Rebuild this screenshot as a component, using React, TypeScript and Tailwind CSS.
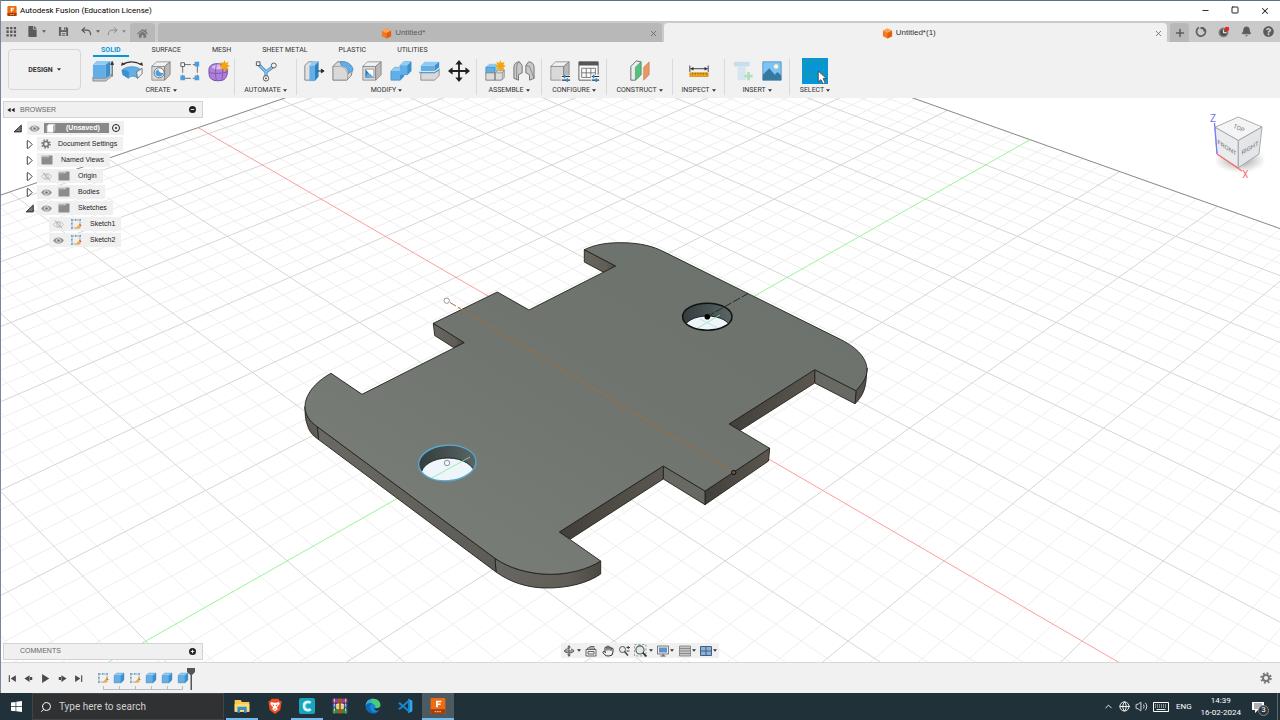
import type { ReactNode } from "react";
import clsx from "clsx";
import { Bell, X, Minus, Square, Plus, Search, ChevronUp, Volume2, Globe, Hand } from "lucide-react";
import { FaHome, FaQuestionCircle, FaFile } from "react-icons/fa";

// ─── Shared bits ────────────────────────────────────────────────────────────────
function Caret({ className }: { className?: string }) {
  return (
    <svg viewBox="0 0 6 4" className={clsx("w-1 h-[3px] shrink-0", className)}>
      <path d="M0 0h6L3 4z" fill="currentColor" />
    </svg>
  );
}

function Icon({ children, className = "size-6" }: { children: ReactNode; className?: string }) {
  return (
    <svg viewBox="0 0 24 24" fill="none" className={clsx("shrink-0", className)} strokeLinejoin="round">
      {children}
    </svg>
  );
}

function Cube({ front, top, side, edge }: { front: string; top: string; side: string; edge: string }) {
  return (
    <g stroke={edge} strokeWidth="0.7">
      <path d="M2 7h14v15H2z" fill={front} />
      <path d="M2 7l5-5h15l-6 5z" fill={top} />
      <path d="M16 7l6-5v14l-6 6z" fill={side} />
    </g>
  );
}

const BLUE = { front: "#62aee6", top: "#8fcaf4", side: "#3d8fce", edge: "#4a8fc4" };
const GREY = { front: "#d9d9d9", top: "#f2f2f2", side: "#b9b9b9", edge: "#707070" };

function Spark() {
  return <path d="M18 0l1.300 3.400 3.300-1.500-1.500 3.300L24 6.500l-2.900 1.300 1.500 3.300-3.300-1.500L18 13l-1.300-3.400-3.300 1.500 1.500-3.300L12 6.500l2.900-1.300-1.500-3.300 3.300 1.500z" fill="#f5a40c" />;
}

// ─── Ribbon icons ───────────────────────────────────────────────────────────────
const icons: Record<string, ReactNode> = {
  extrude: (
    <>
      <path d="M1 19v4h14l6-5v-2l-6 4H1z" fill="#c4c4c4" stroke="#777" strokeWidth="0.8" />
      <path d="M1 5h14v15H1z" fill="#62aee6" />
      <path d="M1 5l4-4h15l-5 4z" fill="#8fcaf4" />
      <path d="M15 5l5-4v15l-5 4z" fill="#3d8fce" />
      <path d="M22 18V4M20.500 5L22 1.500 23.500 5z" stroke="#333" fill="#333" />
    </>
  ),
  revolve: (
    <>
      <path d="M2 5c5-4 14-4 20 0" stroke="#333" strokeWidth="1.200" />
      <path d="M0 6.500l1-4 3.500 2zM24 6.500l-1-4-3.500 2z" fill="#333" />
      <path d="M1 11c5-5 17-5 21 0l-4 9c-3-3-7-3-10 0l-6-4z" fill="#62aee6" stroke="#3e85ba" strokeWidth="0.7" />
      <path d="M1 11c3-1 6 0 8 3l-1 6-6-4z" fill="#3d8fce" />
      <path d="M17 13l6-4v6l-5 5z" fill="#eee" stroke="#555" strokeWidth="0.8" />
    </>
  ),
  hole: (
    <>
      <Cube {...GREY} />
      <circle cx="10" cy="14" r="5.500" fill="#fafafa" stroke="#666" />
      <path d="M6 15.500A4.500 4.500 0 0 0 14.500 14 5 5 0 0 1 9 10a5 5 0 0 0-3 5.500z" fill="#4b9fde" />
    </>
  ),
  pattern: (
    <>
      <path d="M4 5h16M4 5v15M20 5v15M4 20h16" stroke="#666" strokeDasharray="9 2" />
      <path d="M2 3h4v4H2z" fill="#fff" stroke="#555" />
      <path d="M17 2h5v5h-5zM1.500 17h5v5h-5zM17 17h5v5h-5z" fill="#4a9fe0" />
    </>
  ),
  form: (
    <>
      <path d="M1 11c0-5 4-7 9-7s10 2 11 6-1 11-5 12-9 1-12-1-3-6-3-10z" fill="#ae80da" stroke="#6b4798" />
      <path d="M4 8c2-3 5-3 9-3l3 4c-4 2-8 2-12-1z" fill="#d9bdf3" />
      <path d="M9 5c-1 5-1 12 0 17M15 5c2 5 1 12 0 16M2 14c6 1 13 1 19-1" stroke="#7f55ad" />
      <Spark />
    </>
  ),
  automate: (
    <>
      <path d="M4 5l8 8 8-6M12 13v6" stroke="#4a8fc4" strokeWidth="3.500" />
      <path d="M4 5l8 8 8-6M12 13v6" stroke="#8fc6ef" strokeWidth="1.500" />
      <path d="M1.500 2h4v4h-4z" fill="#eee" stroke="#555" />
      <circle cx="20.500" cy="6" r="2.700" fill="#eee" stroke="#555" />
      <circle cx="12" cy="20" r="3" fill="#eee" stroke="#555" />
      <circle cx="12" cy="20" r="1" fill="#555" />
    </>
  ),
  press: (
    <>
      <path d="M2 6l4-4h5v16l-4 4H2z" fill="#e1e1e1" stroke="#666" strokeWidth="0.8" />
      <path d="M7 6h6v17H7z" fill="#62aee6" />
      <path d="M7 6l4-5h6l-4 5z" fill="#8fcaf4" />
      <path d="M13 6l4-5v17l-4 5z" fill="#2f80bf" />
      <path d="M16 12h4M20 10l3 2-3 2z" stroke="#222" fill="#222" />
    </>
  ),
  fillet: (
    <>
      <path d="M1 7l5-5h7c5 1 9 5 9 10l-1 5-5 5H1z" fill="#d9d9d9" stroke="#777" />
      <path d="M9 2h5c5 1 9 5 9 9l-5 4c0-5-3-8-8-9z" fill="#62aee6" stroke="#3e85ba" strokeWidth="0.700" />
      <path d="M1 7h8c5 1 7 4 8 8v7" stroke="#888" strokeWidth="0.700" />
    </>
  ),
  shell: (
    <>
      <Cube {...GREY} />
      <path d="M5 10h9v9H5z" fill="#fff" stroke="#777" strokeWidth="0.7" />
      <path d="M5 10l4 5v4H5z" fill="#2f80bf" />
      <path d="M5 19h9l-4-4H7z" fill="#62aee6" />
    </>
  ),
  combine: (
    <>
      <path d="M1 12l4-4h6V6l4-4h8v10l-4 4h-4v2l-4 4H1z" fill="#62aee6" stroke="#4189bd" strokeWidth="0.7" />
      <path d="M11 6l4-4h8l-4 4zM1 12l4-4h6v4z" fill="#93cdf5" />
      <path d="M19 6l4-4v10l-4 4zM11 22l4-4v-2h-2l-2 1z" fill="#3d8fce" />
    </>
  ),
  split: (
    <>
      <path d="M2 14h15l5-3v6l-5 5H2z" fill="#d9d9d9" stroke="#777" strokeWidth="0.8" />
      <path d="M2 6h15v6H2z" fill="#62aee6" />
      <path d="M2 6l4-4h16l-5 4z" fill="#8fcaf4" />
      <path d="M17 6l5-4v6l-5 4z" fill="#3d8fce" />
      <path d="M0 13.500h17l6-4" stroke="#319de4" />
    </>
  ),
  move: (
    <path d="M11 5v6H5V8L0 12l5 4v-3h6v6H8l4 5 4-5h-3v-6h6v3l5-4-5-4v3h-6V5h3l-4-5-4 5z" fill="#222" />
  ),
  component: (
    <>
      <path d="M2 7l4-3h8v8H2z" fill="#8fcaf4" />
      <path d="M2 8h10v7H2z" fill="#62aee6" stroke="#3e85ba" strokeWidth="0.700" />
      <path d="M2 14h10v8H2zM12 14l3-3h7v8l-3 3h-7z" fill="#ddd" stroke="#777" strokeWidth="0.900" />
      <path d="M12 14h8l2-3M20 14v8" stroke="#888" strokeWidth="0.800" />
      <Spark />
    </>
  ),
  joint: (
    <g fill="#c9c9c9" stroke="#707070">
      <path d="M1 20V8c0-4 3-6 6-6l3 4v8l-4 2v6z" />
      <path d="M23 20V8c0-4-3-6-6-6l-3 4v8l4 2v6z" />
      <path d="M4 21V9c0-4 1-6 3-7M14 6l4 1 5 13" fill="none" strokeWidth="0.800" />
    </g>
  ),
  configure: (
    <>
      <Cube {...GREY} />
      <path d="M13 17h11v7H13z" fill="#f1f1f1" />
      <path d="M14 18h9M14 22h9" stroke="#333" strokeWidth="1.200" />
      <path d="M17 16v4M20 20v4" stroke="#1896dc" strokeWidth="1.600" />
    </>
  ),
  table: (
    <>
      <path d="M1 2h21v20H1z" fill="#fafafa" stroke="#555" />
      <path d="M1 2h21v4H1z" fill="#555" />
      <path d="M4 9h15v10H4zM4 14h15M9 9v10M14 9v10" stroke="#666" strokeWidth="0.900" />
      <path d="M14 16h10v8H14z" fill="#f1f1f1" />
      <path d="M15 18h8M15 22h8" stroke="#333" strokeWidth="1.200" />
      <path d="M17 16v4M20 20v4" stroke="#1896dc" strokeWidth="1.600" />
    </>
  ),
  plane: (
    <>
      <path d="M2 7l6-6 5 1v14l-6 6H2z" fill="#ededed" stroke="#666" />
      <path d="M7 8l6-6v14l-6 6z" fill="#55c17f" stroke="#459a69" strokeWidth="0.700" />
      <path d="M16 8l6-6v14l-6 6z" fill="#e99763" stroke="#c67e50" strokeWidth="0.700" />
    </>
  ),
  measure: (
    <>
      <path d="M2 6v7M22 6v7M4 9.500h16" stroke="#333" />
      <path d="M2 9.500l4-2v4zM22 9.500l-4-2v4z" fill="#333" />
      <path d="M2 14h20v4H2z" fill="#f2a513" stroke="#c27f0a" strokeWidth="0.700" />
      <path d="M5 14v2M8 14v2M11 14v2M14 14v2M17 14v2M20 14v2" stroke="#7a5106" strokeWidth="0.800" />
    </>
  ),
  bolt: (
    <>
      <path d="M2 2h17v5H2z" fill="#c8dceb" />
      <path d="M6 7h9v15H6z" fill="#d7e5f0" />
      <path d="M18 13v9M13.500 17.500h9" stroke="#b1dfbc" strokeWidth="3" />
    </>
  ),
  decal: (
    <>
      <path d="M2 2h20v20H2z" fill="#7cc3f7" stroke="#5a92c0" />
      <circle cx="16.500" cy="7" r="2.500" fill="#fff7c5" />
      <path d="M2 16l7-7 6 7 3-3 4 4v5H2z" fill="#37789f" />
    </>
  ),
  select: (
    <>
      <path d="M0 0h24v24H0z" fill="#0696d7" />
      <path d="M2 2.500h18v14H2z" stroke="#31a15f" strokeDasharray="3 2" />
      <path d="M15 12v10l2.500-2 2 4 2-1-2-4h3z" fill="#fff" stroke="#444" strokeWidth="0.800" />
    </>
  ),
};

interface Group {
  label: string;
  items: string[];
  width: string;
}

const groups: Group[] = [
  { label: "CREATE", items: ["extrude", "revolve", "hole", "pattern", "form"], width: "w-[147px]" },
  { label: "AUTOMATE", items: ["automate"], width: "w-[62px]" },
  { label: "MODIFY", items: ["press", "fillet", "shell", "combine", "split", "move"], width: "w-[180px]" },
  { label: "ASSEMBLE", items: ["component", "joint"], width: "w-[65px]" },
  { label: "CONFIGURE", items: ["configure", "table"], width: "w-[65px]" },
  { label: "CONSTRUCT", items: ["plane"], width: "w-[66px]" },
  { label: "INSPECT", items: ["measure"], width: "w-[52px]" },
  { label: "INSERT", items: ["bolt", "decal"], width: "w-[65px]" },
  { label: "SELECT", items: ["select"], width: "w-[50px]" },
];

const workspaceTabs = ["SOLID", "SURFACE", "MESH", "SHEET METAL", "PLASTIC", "UTILITIES"];

// ─── Title bar + document tabs ──────────────────────────────────────────────────
function FusionLogo({ className }: { className?: string }) {
  return (
    <Icon className={className}>
      <rect x="1" y="0" width="22" height="24" rx="2" fill="#f06a10" />
      <path d="M1 17h22v5l-2 2H3l-2-2z" fill="#a93c04" />
      <path d="M9 14V4h8v2.300h-5.200v2H16v2.200h-4.200V14z" fill="#fff" />
      <path d="M7 20.500h10" stroke="#e9b69a" strokeWidth="2" strokeDasharray="2.500 1" />
    </Icon>
  );
}

function OrangeCube() {
  return (
    <Icon className="size-[11px]">
      <path d="M12 1l10 5v12l-10 5-10-5V6z" fill="#f47a1f" />
      <path d="M12 1l10 5-10 5L2 6z" fill="#fda45c" />
      <path d="M12 11l10-5v12l-10 5z" fill="#df5f0c" />
    </Icon>
  );
}

function TitleBar() {
  return (
    <header className="flex h-[21px] items-center border-t border-[#5f6f86] bg-white pl-[7px] font-[Roboto,sans-serif]">
      <FusionLogo className="size-[10px]" />
      <span className="ml-[3px] text-[8px] leading-3 text-black">Autodesk Fusion (Education License)</span>
      <div className="ml-auto flex text-[#222]">
        <button aria-label="Minimize" className="flex w-[30px] justify-center"><Minus size={9} strokeWidth={2.5} /></button>
        <button aria-label="Maximize" className="flex w-[30px] justify-center"><Square size={8} strokeWidth={3} /></button>
        <button aria-label="Close" className="flex w-[30px] justify-center"><X size={10} strokeWidth={2.5} /></button>
      </div>
    </header>
  );
}

function DocumentTabs() {
  return (
    <nav className="flex h-[21px] items-end bg-[#cacaca] text-[#5b5b5b]">
      <div className="flex h-full w-[130px] shrink-0 items-center pl-[6px]">
        <button aria-label="Data panel">
          <Icon className="size-[11px]">
            <path d="M1 2h5v5H1zM9 2h5v5H9zM17 2h5v5h-5zM1 10h5v5H1zM9 10h5v5H9zM17 10h5v5h-5zM1 18h5v5H1zM9 18h5v5H9zM17 18h5v5h-5z" fill="#555" />
          </Icon>
        </button>
        <button aria-label="File" className="ml-[10px] flex items-center gap-1"><FaFile size={11} /><Caret /></button>
        <button aria-label="Save" className="ml-[12px]">
          <Icon className="size-[11px]">
            <path d="M2 2h17l3 3v17H2z" fill="#606060" />
            <path d="M7 2h10v7H7zM6 13h12v9H6z" fill="#cacaca" />
            <path d="M13 3h3v5h-3zM8 15h8v2H8zM8 19h8v2H8z" fill="#606060" />
          </Icon>
        </button>
        <button aria-label="Undo" className="ml-[12px] flex items-center gap-1">
          <Icon className="size-[11px]"><path d="M9 3L2 9l7 6M2 9h11c6 0 8 4 8 11" stroke="#555" strokeWidth="2.500" /></Icon>
          <Caret />
        </button>
        <button aria-label="Redo" className="ml-[7px] flex items-center gap-1 text-[#858585]">
          <Icon className="size-[11px]"><path d="M15 3l7 6-7 6M22 9H11c-6 0-8 4-8 11" stroke="#858585" strokeWidth="2" /></Icon>
          <Caret />
        </button>
      </div>
      <button aria-label="Home" className="flex h-[19px] w-[25px] shrink-0 items-center justify-center rounded-t-sm bg-[#b8b8b8] pt-px text-[#777]"><FaHome size={11} /></button>
      <div className="ml-[3px] flex h-[19px] flex-1 items-center rounded-t-sm bg-[#b8b8b8] pt-px pr-1">
        <a href="#untitled" className="flex flex-1 items-center justify-center gap-[3px] text-[8px]"><OrangeCube />Untitled*</a>
        <button aria-label="Close tab"><X size={9} /></button>
      </div>
      <div className="ml-[2px] flex h-[19px] flex-1 items-center rounded-t-sm bg-[#f1f1f1] pt-px pr-1">
        <a href="#untitled-1" className="flex flex-1 items-center justify-center gap-[3px] text-[8px] text-[#333]"><OrangeCube />Untitled*(1)</a>
        <button aria-label="Close tab"><X size={9} /></button>
      </div>
      <button aria-label="New tab" className="ml-[3px] flex h-[19px] w-[19px] items-center justify-center rounded-t-sm bg-[#b8b8b8]"><Plus size={12} strokeWidth={3} /></button>
      <div className="flex h-[21px] w-[91px] shrink-0 items-center justify-around">
        <button aria-label="Extensions">
          <Icon className="size-3">
            <path d="M8 3a9 9 0 1 0 12 4" stroke="#606060" strokeWidth="3.500" />
            <path d="M11 2h6l5 5-1 5-4-1-1-4-5-1z" fill="#606060" />
          </Icon>
        </button>
        <button aria-label="Job status">
          <Icon className="size-3">
            <circle cx="11" cy="13" r="10" fill="#858585" />
            <circle cx="11" cy="13" r="7" fill="#505050" />
            <path d="M11 7v6h6" stroke="#ddd" strokeWidth="2.500" />
            <circle cx="18" cy="6" r="4.500" fill="#f02020" />
          </Icon>
        </button>
        <button aria-label="Notifications"><Bell size={11} fill="currentColor" /></button>
        <button aria-label="Help"><FaQuestionCircle size={11} /></button>
      </div>
    </nav>
  );
}

// ─── Ribbon ─────────────────────────────────────────────────────────────────────
function Ribbon() {
  return (
    <div className="flex h-14 bg-[#f1f1f1] font-[Roboto,sans-serif] text-[7px] leading-[10px] text-[#333]">
      <button className="mr-[7px] ml-2 mt-[7px] flex h-[41px] w-[73px] shrink-0 items-center justify-center gap-1 rounded-sm border border-[#d6d6d6] font-bold">
        DESIGN <Caret />
      </button>
      <div className="flex flex-col">
        <div className="ml-[5px] flex h-[15px] gap-[15px]">
          {workspaceTabs.map((tab, i) => (
            <button
              key={tab}
              className={clsx("border-b-2 px-2 pt-[2px]", i === 0 ? "border-[#0696d7] font-bold text-[#0696d7]" : "border-transparent")}
            >
              {tab}
            </button>
          ))}
        </div>
        <div className="flex pt-[2px]">
          {groups.map(group => (
            <section key={group.label} className={clsx("flex h-9 shrink-0 flex-col items-center border-r border-[#dadada] last:border-0", group.width)}>
              <div className="mb-[2px] flex h-[24px] items-center">
                {group.items.map(item => (
                  <button key={item} aria-label={item} className="flex w-[29px] justify-center">
                    <Icon className={item === "select" ? "size-[26px]" : "size-[22px]"}>{icons[item]}</Icon>
                  </button>
                ))}
              </div>
              <button className="flex items-center gap-[2px]">{group.label}<Caret /></button>
            </section>
          ))}
        </div>
      </div>
    </div>
  );
}

// ─── 3D scene ───────────────────────────────────────────────────────────────────
const U_MIN = -6.2;
const V_MAX = 5.8;
const REACH = 4.6;

// ground plane -> screen
function project(u: number, v: number) {
  const w = 1 - 0.0539 * u + 0.0539 * v;
  const x = (619.6 + 57.3 * u + 126.3 * v) / w;
  const y = (372.4 + 32.6 * u - 32.6 * v) / w;
  return `${x.toFixed(1)} ${y.toFixed(1)}`;
}

const alongU = (v: number) => `M${project(U_MIN, v)}L${project(v + REACH, v)}`;
const alongV = (u: number) => `M${project(u, u - REACH)}L${project(u, V_MAX)}`;

function gridPath(major: boolean) {
  let d = "";
  for (let i = -31; i <= 52; i++) {
    if (i !== 0 && (i % 5 === 0) === major) d += alongV(i / 5);
  }
  for (let i = -54; i <= 29; i++) {
    if (i !== 0 && (i % 5 === 0) === major) d += alongU(i / 5);
  }
  return d;
}

const PLATE =
  "M584.300 249.700C596 244 609 242.500 623 242.700C640 243 653 246 665 252.300L841.700 340C857 348 867 358 867 370C867 378 862 384 856 390.700L814.700 369.700L729 424L769.700 448.300L705 491L663.300 466L559.300 532L600.700 561C588 569 570 574.300 550 574.300C528 574 509 568 495 558.300L317.300 426.700C309 421 305 414 305 406.700C305 395 315 382 331 373.300L362 394.300L464.300 342.700L433.300 323.300L497.300 292L529 310L615.700 266Z";

function Scene() {
  return (
    <svg viewBox="0 98 1280 564" preserveAspectRatio="xMidYMid slice" className="absolute inset-0 size-full" fill="none">
      <defs>
        <linearGradient id="top" x1="0" y1="1" x2="1" y2="0">
          <stop offset="0" stopColor="#7b807b" />
          <stop offset="0.5" stopColor="#70756f" />
          <stop offset="1" stopColor="#6b716b" />
        </linearGradient>
        <linearGradient id="side" x1="0" y1="0" x2="1" y2="1">
          <stop offset="0" stopColor="#6a6963" />
          <stop offset="1" stopColor="#5d5b55" />
        </linearGradient>
        <linearGradient id="dark" x1="0" y1="0" x2="1" y2="0">
          <stop offset="0" stopColor="#423e39" />
          <stop offset="1" stopColor="#5b5750" />
        </linearGradient>
        <linearGradient id="round" x1="0" y1="0" x2="1" y2="0">
          <stop offset="0" stopColor="#686660" />
          <stop offset="0.7" stopColor="#605d57" />
          <stop offset="1" stopColor="#4c4943" />
        </linearGradient>
        <linearGradient id="bore" x1="0" y1="0" x2="1" y2="0">
          <stop offset="0" stopColor="#343c3d" />
          <stop offset="1" stopColor="#5b6667" />
        </linearGradient>
        <clipPath id="holeLeft"><ellipse cx="447.300" cy="463" rx="28.700" ry="17.800" transform="rotate(-4 447.300 463)" /></clipPath>
        <clipPath id="holeRight"><ellipse cx="707.300" cy="316.700" rx="24.700" ry="13.500" /></clipPath>
      </defs>

      <path d={gridPath(false)} stroke="#eeeeee" />
      <path d={gridPath(true)} stroke="#d6d6d6" />
      <path d={alongU(V_MAX) + alongV(U_MIN)} stroke="#8c8c8c" />
      <path d={alongU(0)} stroke="#ff9c9c" />
      <path d={alongV(0)} stroke="#97f597" />

      <g stroke="#22211f" strokeWidth="0.9" strokeLinejoin="round">
        <path d="M584.300 249.700V262L604 272.500L615.700 266Z" fill="url(#round)" />
        <path d="M433.300 323.300L434.700 335.500L453.500 347.500L464.300 342.700Z" fill="url(#round)" />
        <path d="M867 368L866 381C865 390 862 397 855 403.700L856 390.700C863 382 867 376 867 368Z" fill="#55514b" />
        <path d="M814.700 369.700V383L855 403.700L856 390.700Z" fill="#696964" />
        <path d="M814.700 369.700V383L740 430.500L729 424Z" fill="url(#dark)" />
        <path d="M769.700 448.300L768.500 461L705 504.700V491Z" fill="url(#dark)" />
        <path d="M663.300 466V479L705 504.700V491Z" fill="#696964" />
        <path d="M663.300 466V479L570.500 539L559.300 532Z" fill="url(#dark)" />
        <path d="M600.700 561V574C588 583 568 588 547 588C527 588 510 582 496 572L495 558.300C509 568 528 574 550 574.300C570 574.300 588 569 600.700 561Z" fill="url(#round)" />
        <path d="M317.300 426.700L318.500 439.500L496 572L495 558.300Z" fill="url(#side)" />
        <path d="M305 406.700C305 417 306 422 307.500 425C309 431 312 435 318.500 439.500L317.300 426.700C309 421 305 414 305 406.700Z" fill="#5f5c56" />
        <path d={PLATE} fill="url(#top)" />
      </g>

      <g clipPath="url(#holeLeft)">
        <path d="M418 444h60v38h-60z" fill="url(#bore)" />
        <ellipse cx="448" cy="475" rx="27" ry="17" fill="#eef6fb" stroke="#1f2425" />
        <path d="M430 479L470 457" stroke="#8ce79a" strokeOpacity="0.8" />
      </g>
      <ellipse cx="447.300" cy="463" rx="28.700" ry="17.800" transform="rotate(-4 447.300 463)" stroke="#55a9d5" strokeWidth="1.300" />
      <circle cx="447" cy="463" r="2.700" stroke="#8f9698" />

      <g clipPath="url(#holeRight)">
        <path d="M682 302h51v30h-51z" fill="url(#bore)" />
        <ellipse cx="707.300" cy="328.500" rx="23" ry="12.500" fill="#eef6fb" stroke="#1f2425" />
        <path d="M697 328.500L720 315" stroke="#8ce79a" strokeOpacity="0.8" />
        <path d="M700 319l18 9" stroke="#ccdcde" />
      </g>
      <ellipse cx="707.300" cy="316.700" rx="24.700" ry="13.500" stroke="#101314" strokeWidth="1.500" />
      <path d="M707 316.700L748 293.500" stroke="#262a28" strokeDasharray="8 2" />
      <circle cx="707.300" cy="316.700" r="2.800" fill="#000" />

      <path d="M450 302.500L733 472" stroke="#b3692f" strokeDasharray="7 2" />
      <circle cx="446.700" cy="300.700" r="2.700" fill="#fff" stroke="#999" />
      <circle cx="733.700" cy="472.500" r="2.200" fill="#555" stroke="#111" />
    </svg>
  );
}

function ViewCube() {
  return (
    <svg viewBox="1206 108 60 74" className="absolute top-[10px] right-[14px] h-[74px] w-[60px]" fill="none" strokeLinejoin="round">
      <defs>
        <radialGradient id="shade">
          <stop offset="0" stopColor="#777" stopOpacity="0.8" />
          <stop offset="1" stopColor="#999" stopOpacity="0" />
        </radialGradient>
      </defs>
      <ellipse cx="1240" cy="160" rx="26" ry="13" fill="url(#shade)" />
      <g stroke="#999" strokeWidth="0.8">
        <path d="M1238.300 117L1262 127L1238.300 140.500L1215 127.300Z" fill="#f4f4f5" />
        <path d="M1215 127.300L1238.300 140.500V167.700L1217 154Z" fill="#eaebed" />
        <path d="M1262 127L1238.300 140.500V167.700L1259 154Z" fill="#e3e5e8" />
      </g>
      <path d="M1214.500 123L1217 154" stroke="#7b7bff" strokeWidth="1.300" />
      <path d="M1217 154L1242 171" stroke="#ff6f6f" strokeWidth="1.300" />
      <g fontFamily="Roboto, sans-serif" fontSize="6" fill="#70747a" textAnchor="middle">
        <text transform="translate(1227 150) skewY(33)">FRONT</text>
        <text transform="translate(1250 150) skewY(-30)">RIGHT</text>
        <text transform="translate(1238 130) rotate(26)">TOP</text>
      </g>
      <g fontFamily="Roboto, sans-serif" fontSize="10" textAnchor="middle">
        <text x="1213" y="122" fill="#6f6fff">Z</text>
        <text x="1245.500" y="178" fill="#ff7070">X</text>
      </g>
    </svg>
  );
}

// ─── Browser tree ───────────────────────────────────────────────────────────────
interface TreeRow {
  label: string;
  icon: "gear" | "folder" | "sketch";
  eye?: "on" | "off";
  open?: boolean;
  leaf?: boolean;
}

const rows: TreeRow[] = [
  { label: "Document Settings", icon: "gear" },
  { label: "Named Views", icon: "folder" },
  { label: "Origin", icon: "folder", eye: "off" },
  { label: "Bodies", icon: "folder", eye: "on" },
  { label: "Sketches", icon: "folder", eye: "on", open: true },
  { label: "Sketch1", icon: "sketch", eye: "off", leaf: true },
  { label: "Sketch2", icon: "sketch", eye: "on", leaf: true },
];

function Twisty({ open }: { open?: boolean }) {
  return (
    <Icon className="size-[9px]">
      {open ? <path d="M22 3v18H3z" fill="#777" stroke="#222" strokeWidth="2.500" /> : <path d="M6 2h3l10 10L9 22H6z" fill="#fff" stroke="#333" strokeWidth="2.500" />}
    </Icon>
  );
}

function Visibility({ on }: { on: boolean }) {
  return (
    <Icon className="size-[11px]">
      {on ? (
        <>
          <path d="M0 12C5 3 19 3 24 12 19 21 5 21 0 12z" fill="#999" />
          <circle cx="12" cy="12" r="5" fill="#e8e8e8" />
          <circle cx="12" cy="12" r="3" fill="#777" />
        </>
      ) : (
        <>
          <path d="M1 12C6 4 18 4 23 12 18 20 6 20 1 12z" stroke="#aaa" strokeWidth="1.500" />
          <circle cx="12" cy="12" r="4" stroke="#aaa" strokeWidth="1.500" />
          <path d="M4 3l16 18" stroke="#999" strokeWidth="1.500" />
        </>
      )}
    </Icon>
  );
}

function SketchIcon({ className = "size-3" }: { className?: string }) {
  return (
    <Icon className={className}>
      <path d="M4 4h16v16H4z" stroke="#777" strokeWidth="1.200" strokeDasharray="4 1" />
      <path d="M2 2h3v3H2zM19 2h3v3h-3zM2 19h3v3H2zM10 2h3v3h-3zM2 10h3v3H2z" fill="#4a9fe0" />
      <path d="M12 22l1-4 7-6 3 3-7 6z" fill="#f3ae35" />
      <path d="M20 12l3 3-2 1-3-3z" fill="#dc4d48" />
    </Icon>
  );
}

function FolderIcon() {
  return (
    <Icon className="size-3">
      <path d="M1 3h22v18H1z" fill="#8c8c8c" />
      <path d="M1 3h13l2 3h-2l-1-1H1z" fill="#f0f0f0" />
      <path d="M1 7.500h13l2-2" stroke="#b4b4b4" />
    </Icon>
  );
}

function Gear({ className }: { className?: string }) {
  return (
    <Icon className={className}>
      <circle cx="12" cy="12" r="6" stroke="#777" strokeWidth="4" />
      <circle cx="12" cy="12" r="9.500" stroke="#777" strokeWidth="4" strokeDasharray="3.730 3.730" />
    </Icon>
  );
}

function PanelHeader({ title, arrows, plus }: { title: string; arrows?: boolean; plus?: boolean }) {
  return (
    <div className="flex h-[17px] w-[200px] items-center border border-[#d3d3d3] bg-[#f0f0f0] pr-[6px] pl-[3px] text-[7px] text-[#666]">
      <div className="w-[13px]">
        {arrows && <Icon className="size-2"><path d="M11 5v14L1 12zM23 5v14l-10-7z" fill="#222" /></Icon>}
      </div>
      <h2 className="flex-1">{title}</h2>
      <button aria-label={`${title} options`}>
        <Icon className="size-[7px]">
          <circle cx="12" cy="12" r="12" fill="#222" />
          <path d={plus ? "M6 12h12M12 6v12" : "M6 12h12"} stroke="#fff" strokeWidth="3" />
        </Icon>
      </button>
    </div>
  );
}

function BrowserPanel() {
  return (
    <aside className="absolute top-[3px] left-[3px] text-[7px] leading-[14px] text-[#222]">
      <PanelHeader title="BROWSER" arrows />
      <ul className="pt-[2px]">
        <li className="flex h-4 items-center pl-[10px]">
          <button aria-label="Collapse"><Twisty open /></button>
          <div className="ml-[5px] flex h-[14px] items-center bg-[#f0f0f0] pr-1">
            <span className="flex w-[17px] pl-[2px]"><Visibility on /></span>
            <button className="mr-[3px] flex h-[10px] w-[65px] items-center gap-[10px] bg-[#888] pl-[2px] font-bold text-white">
              <Icon className="size-[10px]"><path d="M3 7l4-4h14v14l-4 5H3z" fill="#fff" stroke="#ddd" strokeWidth="2" /><path d="M17 7l4-4v14l-4 5z" fill="#aaa" /></Icon>
              (Unsaved)
            </button>
            <input type="radio" name="active" defaultChecked aria-label="Activate component" className="size-2 appearance-none rounded-full border border-[#222] bg-[#222] bg-clip-content p-[2px]" />
          </div>
        </li>
        {rows.map(row => (
          <li key={row.label} className={clsx("flex h-4 items-center", row.leaf ? "pl-[46px]" : "pl-[22px]")}>
            {!row.leaf && <button aria-label="Expand" className="mr-[3px]"><Twisty open={row.open} /></button>}
            <button className="flex h-[14px] items-center bg-[#f0f0f0] pr-[6px] pl-[4px]">
              {row.eye && <span className="w-[17px]"><Visibility on={row.eye === "on"} /></span>}
              <span className={clsx("flex", row.icon === "gear" ? "w-[17px]" : "w-[20px]")}>
                {row.icon === "gear" && <Gear className="size-[10px]" />}
                {row.icon === "folder" && <FolderIcon />}
                {row.icon === "sketch" && <SketchIcon />}
              </span>
              {row.label}
            </button>
          </li>
        ))}
      </ul>
    </aside>
  );
}

// ─── Navigation bar ─────────────────────────────────────────────────────────────
function NavBar() {
  return (
    <div className="absolute bottom-1 left-1/2 flex h-[15px] w-[158px] -translate-x-1/2 items-center justify-between bg-[#f0f0f0] px-[2px] text-[#333]">
      <button aria-label="Orbit" className="flex items-center gap-[2px]">
        <Icon className="size-3"><path d="M12 1v22M2 12h20M12 7c-12 2-12 8 0 9 12-1 12-6 4-8" stroke="#555" strokeWidth="2" /><path d="M8 5l4-4 4 4zM8 19l4 4 4-4z" fill="#555" /></Icon>
        <Caret />
      </button>
      <button aria-label="Look at">
        <Icon className="size-3"><path d="M2 9h20v13H2zM6 13h12v5H6zM5 9V6h14v3M8 6l2-3h9" stroke="#555" strokeWidth="1.800" /></Icon>
      </button>
      <button aria-label="Pan"><Hand size={12} /></button>
      <button aria-label="Zoom">
        <Icon className="size-3"><circle cx="9" cy="9" r="6" fill="#e3eef2" stroke="#555" strokeWidth="2" /><path d="M13 13l7 8" stroke="#444" strokeWidth="3" /><path d="M17 5h7M20.500 2v6M17 12h6" stroke="#444" strokeWidth="2" /></Icon>
      </button>
      <button aria-label="Fit" className="flex items-center gap-[2px]">
        <Icon className="size-[13px]"><path d="M1 1h21v21H1z" stroke="#888" strokeWidth="1.500" strokeDasharray="4 3" /><circle cx="11" cy="11" r="7.500" fill="#d9eaed" stroke="#555" strokeWidth="2" /><path d="M16 16l7 7" stroke="#333" strokeWidth="3" /></Icon>
        <Caret />
      </button>
      <button aria-label="Display settings" className="flex items-center gap-px">
        <Icon className="size-3"><path d="M1 2h22v16H1z" fill="#eee" stroke="#555" strokeWidth="1.500" /><path d="M4 5h16v10H4z" fill="#5d91cd" /><path d="M7 22h10M12 18v4" stroke="#555" strokeWidth="2" /></Icon>
        <Caret />
      </button>
      <button aria-label="Grid and snaps" className="flex items-center gap-px">
        <Icon className="size-3"><path d="M1 2h22v20H1z" fill="#c5c5c5" stroke="#777" strokeWidth="1.500" /><path d="M1 7h22M1 12h22M1 17h22" stroke="#777" strokeWidth="1.500" /></Icon>
        <Caret />
      </button>
      <button aria-label="Viewports" className="flex items-center gap-px">
        <Icon className="size-3"><path d="M1 3h22v18H1z" fill="#89b1df" stroke="#465e7c" strokeWidth="2" /><path d="M12 3v18M1 12h22" stroke="#465e7c" strokeWidth="2" /></Icon>
        <Caret />
      </button>
    </div>
  );
}

// ─── Timeline ───────────────────────────────────────────────────────────────────
const playback = [
  { label: "Go to beginning", d: "M2 3h3v18H2zM21 3v18L7 12z" },
  { label: "Step back", d: "M15 3v18L1 12zM16 8h6v8h-6z" },
  { label: "Play", d: "M3 0v24l19-12z" },
  { label: "Step forward", d: "M9 3v18l14-9zM2 8h6v8H2z" },
  { label: "Go to end", d: "M19 3h3v18h-3zM3 3v18l14-9z" },
];

const features = ["sketch", "extrude", "sketch", "extrude", "extrude", "extrude"];

function Timeline() {
  return (
    <div className="flex h-[31px] items-center border-t border-[#d8d8d8] bg-[#f1f1f1] pr-2 pl-1">
      <div className="flex w-[83px] pt-px">
        {playback.map(({ label, d }) => (
          <button key={label} aria-label={label} className="flex flex-1 justify-center">
            <Icon className="size-[9px]"><path d={d} fill="#4b4b4b" /></Icon>
          </button>
        ))}
      </div>
      <div className="relative ml-2 flex pt-[6px]">
        {features.map((feature, i) => (
          <button key={i} aria-label={`Feature ${i + 1}`} className="flex w-4 flex-col items-center">
            {feature === "sketch" ? <SketchIcon /> : <Icon className="size-3"><Cube {...BLUE} /></Icon>}
            <span
              className={clsx(
                "mt-[2px] flex h-1 border-[#bbb]",
                i === 0 ? "w-2 self-end border-b border-l" : i === 5 ? "w-2 self-start border-r border-b" : "w-4 justify-center border-b"
              )}
            >
              {i > 0 && i < 5 && <i className="h-1 w-px bg-[#bbb]" />}
            </span>
          </button>
        ))}
        <svg viewBox="0 0 10 22" className="absolute top-[2px] -right-[5px] h-[22px] w-[10px]">
          <path d="M1 0h8v4L6 7v15H4.500V7L1 4z" fill="#555" />
        </svg>
      </div>
      <button aria-label="Timeline settings" className="ml-auto"><Gear className="size-3" /></button>
    </div>
  );
}

// ─── Taskbar ────────────────────────────────────────────────────────────────────
const apps: { name: string; running?: boolean; active?: boolean; art: ReactNode }[] = [
  {
    name: "File Explorer",
    running: true,
    art: (
      <>
        <path d="M1 3h9l2 3h11v15H1z" fill="#f8ca4d" />
        <path d="M1 9h22v11H1z" fill="#ffdc73" />
        <path d="M5 13h14v9h-4v-4H9v4H5z" fill="#398ed3" />
      </>
    ),
  },
  {
    name: "Brave",
    art: (
      <>
        <path d="M7 1h10l2 3 3 1-2 13-8 6-8-6L2 5l3-1z" fill="#f24a22" />
        <path d="M6 6l4 1h4l4-1 1 3-4 5 1 3-4 3-4-3 1-3-4-5z" fill="#fff" />
        <path d="M8 9l3 2-1 2zM16 9l-3 2 1 2zM10 16h4l-2 2z" fill="#f24a22" />
      </>
    ),
  },
  {
    name: "Cura",
    running: true,
    art: (
      <>
        <rect width="24" height="24" rx="3" fill="#15a5bd" />
        <path d="M17.500 7.500c-3-3-10-2-10 4.500s7 7.500 10 4.500" stroke="#dff4f7" strokeWidth="4" />
        <path d="M16.500 9c-3-2-6 0-6 3s3 5 6 3" stroke="#6cc5d3" />
      </>
    ),
  },
  {
    name: "WinRAR",
    art: (
      <>
        <path d="M1 1h22v7H1z" fill="#9a4093" />
        <path d="M1 8h22v8H1z" fill="#3259ae" />
        <path d="M1 16h22v7H1z" fill="#338a43" />
        <path d="M1 8h22M1 16h22" stroke="#1c2030" />
        <path d="M3.500 1v22M20.500 1v22" stroke="#e2cfa5" strokeWidth="1.500" strokeDasharray="5 2" />
        <path d="M9 1h6v22H9z" fill="#a95522" />
        <path d="M7 9h10v7H7z" fill="#f5cd4b" stroke="#fff" />
        <path d="M12 6v12" stroke="#7d4118" strokeWidth="2" />
      </>
    ),
  },
  {
    name: "Edge",
    art: (
      <>
        <circle cx="12" cy="12" r="11" fill="#1686d9" />
        <path d="M1 11C2 3 9 0 15 1.500c6 1 9 6 8 11-1 3-5 4-8 3 2-3 0-7-5-7-4 0-7 1-9 2.500z" fill="#4bcc79" />
        <path d="M1 11C2 4 7 1 12 1c-3 2-3 6-2 7.500-4 0-7 1-9 2.500z" fill="#2eaed0" />
        <path d="M1 11c3-4 8-4 11-2-5 0-6 5-4 8 2 5 8 6 12 3-3 4-8 4-12 2.500C3 20 1 16 1 11z" fill="#0f66b5" />
        <path d="M15 15c3 1 7 0 8-3 1 4-2 8-6 7-3-1-4-3-2-4z" fill="#20313a" />
      </>
    ),
  },
  {
    name: "VS Code",
    art: (
      <>
        <path d="M17 1l6 3v16l-6 3z" fill="#33a7ef" />
        <path d="M18 4v16M18 4L3 17M18 20L3 7" stroke="#1686cf" strokeWidth="3" />
      </>
    ),
  },
  { name: "Fusion", running: true, active: true, art: null },
];

function Taskbar() {
  return (
    <footer className="flex h-[27px] items-center bg-[#20313a] font-[Roboto,sans-serif] text-white">
      <button aria-label="Start" className="flex w-8 justify-center">
        <Icon className="size-[11px]"><path d="M0 3.500l10-1.500v9.500H0zM11.500 1.800L24 0v11.500H11.500zM0 13h10v9.500L0 21zM11.500 13H24v11l-12.500-1.800z" fill="#fff" /></Icon>
      </button>
      <label className="flex h-full w-[192px] items-center gap-[7px] border border-[#444] bg-[#303132] pl-[7px]">
        <Search size={12} className="-scale-x-100 text-white" />
        <input type="text" aria-label="Search" placeholder="Type here to search" className="w-40 bg-transparent text-[10px] outline-none placeholder:text-[#d0d0d0]" />
      </label>
      <div className="ml-[2px] flex h-full w-[228px] gap-px">
        {apps.map(app => (
          <button
            key={app.name}
            aria-label={app.name}
            className={clsx("flex flex-1 items-center justify-center border-b-2", app.running ? "border-[#76b9ed]" : "border-transparent", app.active && "bg-[#4c5b62]")}
          >
            {app.active ? <FusionLogo className="size-4" /> : <Icon className="size-4">{app.art}</Icon>}
          </button>
        ))}
      </div>
      <div className="ml-auto flex h-full items-center text-[8px]">
        <button aria-label="Hidden icons" className="mr-[5px]"><ChevronUp size={11} /></button>
        <button aria-label="Network" className="mr-[5px]"><Globe size={11} /></button>
        <button aria-label="Volume" className="mr-[5px]"><Volume2 size={13} strokeWidth={1.5} /></button>
        <button aria-label="Touch keyboard" className="mr-[7px]">
          <svg viewBox="0 0 16 10" className="h-[10px] w-4" fill="none" stroke="#fff">
            <path d="M.5.5h15v9H.5z" />
            <path d="M2 3h12M2 5h12" strokeDasharray="1 1" strokeWidth="0.900" />
            <path d="M3.500 7.500h9" strokeWidth="0.900" />
          </svg>
        </button>
        <button className="mr-[9px]">ENG</button>
        <button className="mr-[11px] flex flex-col items-center leading-3"><span>14:39</span><span>16-02-2024</span></button>
        <button aria-label="Notification center" className="relative mr-[13px] flex">
          <Icon className="size-3"><path d="M0 2h24v16H12l-6 6v-6H0z" fill="#fff" /><path d="M4 6h16M4 10h16M4 14h9" stroke="#20313a" strokeWidth="1.500" /></Icon>
          <span className="absolute top-[4px] left-[6px] flex size-[11px] items-center justify-center rounded-full border border-[#888] bg-[#2b353a] text-[8px] leading-none">3</span>
        </button>
        <span className="mr-[2px] h-full w-px bg-[#5c686e]" />
      </div>
    </footer>
  );
}

export default function App() {
  return (
    <div className="flex h-screen w-full flex-col overflow-hidden bg-white font-['Liberation_Sans',Arial,sans-serif]">
      <div className="relative flex min-h-0 flex-1 flex-col">
        <TitleBar />
        <DocumentTabs />
        <Ribbon />
        <main className="relative min-h-0 flex-1 overflow-hidden bg-white">
          <Scene />
          <ViewCube />
          <BrowserPanel />
          <div className="absolute bottom-[2px] left-[3px]">
            <PanelHeader title="COMMENTS" plus />
          </div>
          <NavBar />
        </main>
        <Timeline />
        <span className="absolute inset-y-0 left-0 w-px bg-[#7b8796]" />
      </div>
      <Taskbar />
    </div>
  );
}
